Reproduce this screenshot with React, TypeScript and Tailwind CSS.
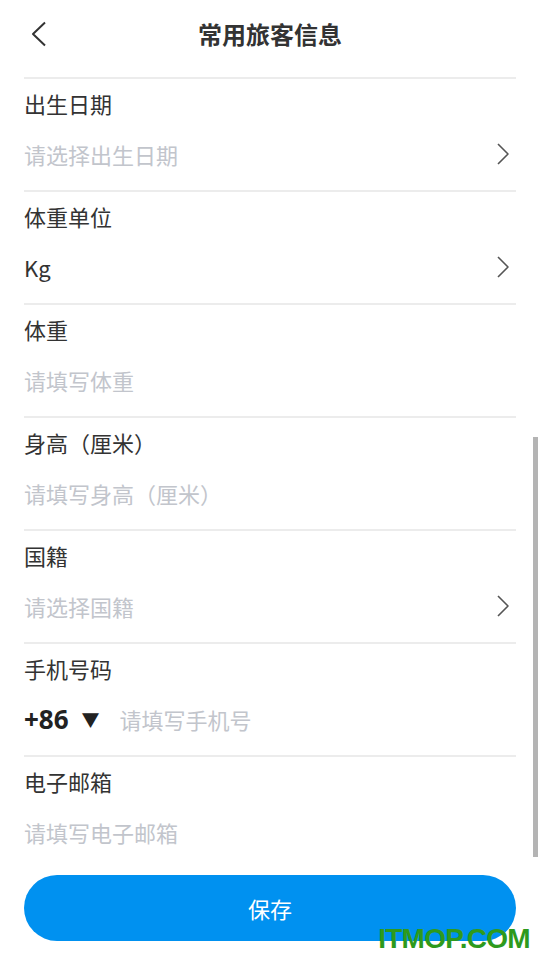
type Field = {
  label: string;
  value: string;
  filled?: boolean;
  arrow?: boolean;
  phone?: boolean;
};

const fields: Field[] = [
  { label: "出生日期", value: "请选择出生日期", arrow: true },
  { label: "体重单位", value: "Kg", filled: true, arrow: true },
  { label: "体重", value: "请填写体重" },
  { label: "身高（厘米）", value: "请填写身高（厘米）" },
  { label: "国籍", value: "请选择国籍", arrow: true },
  { label: "手机号码", value: "请填写手机号", phone: true },
  { label: "电子邮箱", value: "请填写电子邮箱" },
];

function Arrow() {
  return (
    <svg width="16" height="24" viewBox="0 0 16 24" className="mr-[5px]">
      <path d="M3 2 L13 12 L3 22" fill="none" stroke="#555555" strokeWidth="1.6" strokeLinejoin="round" />
    </svg>
  );
}

function Row({ field }: { field: Field }) {
  return (
    <div className="border-t-2 border-[#ececec] pt-[9px] pb-[21px]">
      <div className="h-[30px] leading-[30px] text-[22px] text-[#333333]">{field.label}</div>
      <div className="mt-[21px] h-[30px] flex items-center justify-between">
        {field.phone ? (
          <div className="flex items-center">
            <span className="text-[26px] font-bold text-[#222222] font-['Open_Sans',sans-serif]">+86</span>
            <span className="ml-[13px] text-[18px] text-[#222222] leading-none">▼</span>
            <span className="ml-[20px] text-[22px] text-[#c2c5cc]">{field.value}</span>
          </div>
        ) : (
          <span className={`text-[22px] ${field.filled ? "text-[#333333]" : "text-[#c2c5cc]"}`}>
            {field.value}
          </span>
        )}
        {field.arrow && <Arrow />}
      </div>
    </div>
  );
}

export default function App() {
  return (
    <div className="relative w-[540px] h-[960px] bg-white overflow-hidden font-['Noto_Sans_CJK_SC','Noto_Sans',sans-serif]">
      <header className="h-[77px] flex items-center justify-center relative px-6">
        <svg width="16" height="26" viewBox="0 0 16 26" className="absolute left-[31px] top-[21px]">
          <path d="M14 1.5 L2 13 L14 24.5" fill="none" stroke="#333333" strokeWidth="2" strokeLinejoin="round" />
        </svg>
        <h1 className="text-[24px] font-bold text-[#333333] -mt-[9px]">常用旅客信息</h1>
      </header>
      <main className="px-6">
        {fields.map((f) => (
          <Row key={f.label} field={f} />
        ))}
        <button className="mt-[7px] w-full h-[66px] rounded-full bg-[#0091f0] text-white text-[22px]">
          保存
        </button>
      </main>
      <div className="absolute right-[2px] top-[437px] w-[5px] h-[420px] bg-[#b4b4b4]" />
      <div className="absolute right-[10px] top-[918px] text-[28px] font-bold text-[#2e9a1c] font-['Liberation_Sans',sans-serif] tracking-tight">
        ITMOP.COM
      </div>
    </div>
  );
}
